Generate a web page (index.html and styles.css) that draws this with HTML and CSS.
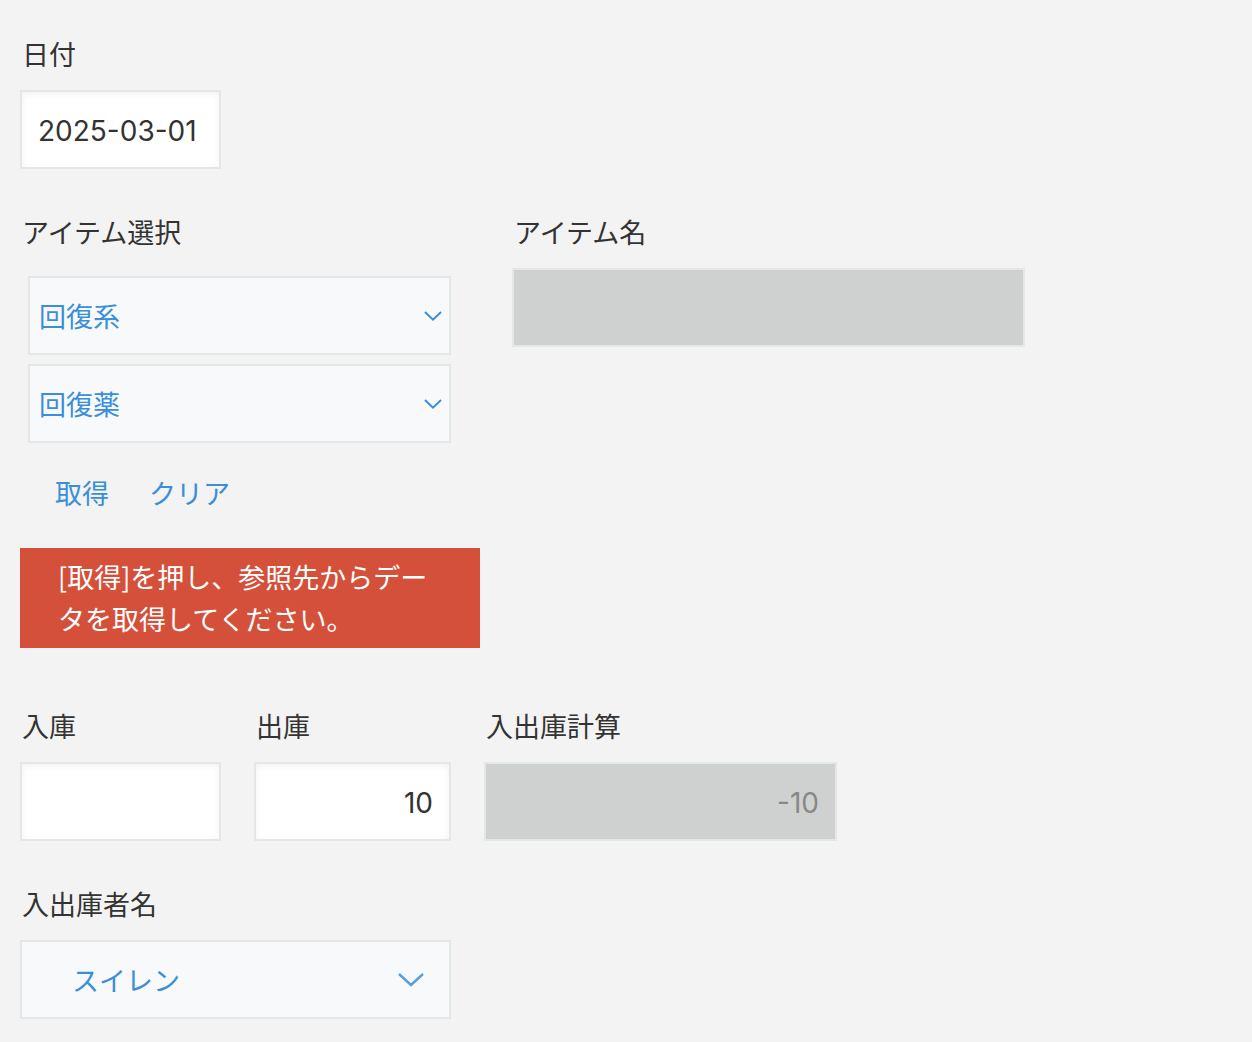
FILE: index.html
```html
<!DOCTYPE html>
<html lang="ja">
<head>
<meta charset="utf-8">
<title>入出庫フォーム</title>
<link rel="stylesheet" href="styles.css">
</head>
<body>
<form class="form">
  <div class="field">
    <div class="label">日付</div>
    <div class="input input-date num-font">2025-03-01</div>
  </div>

  <div class="row row-lookup">
    <div class="field lookup">
      <div class="label">アイテム選択</div>
      <div class="lookup-group">
        <div class="select select-small">
          <span class="select-text">回復系</span>
          <svg class="chev-small" viewBox="0 0 18 10" width="18" height="10"><path d="M1 1 L9 8.6 L17 1" fill="none" stroke="#3a8fd8" stroke-width="2"/></svg>
        </div>
        <div class="select select-small">
          <span class="select-text">回復薬</span>
          <svg class="chev-small" viewBox="0 0 18 10" width="18" height="10"><path d="M1 1 L9 8.6 L17 1" fill="none" stroke="#3a8fd8" stroke-width="2"/></svg>
        </div>
        <div class="buttons">
          <button type="button" class="link-btn">取得</button>
          <button type="button" class="link-btn">クリア</button>
        </div>
      </div>
      <div class="alert">[取得]を押し、参照先からデータを取得してください。</div>
    </div>
    <div class="field">
      <div class="label">アイテム名</div>
      <div class="input disabled input-item"></div>
    </div>
  </div>

  <div class="row row-stock">
    <div class="field">
      <div class="label">入庫</div>
      <div class="input input-in"></div>
    </div>
    <div class="field">
      <div class="label">出庫</div>
      <div class="input input-out num num-font">10</div>
    </div>
    <div class="field">
      <div class="label">入出庫計算</div>
      <div class="input disabled input-calc num num-font">-10</div>
    </div>
  </div>

  <div class="field">
    <div class="label">入出庫者名</div>
    <div class="select select-large">
      <span class="select-text">スイレン</span>
      <svg class="chev-large" viewBox="0 0 28 16" width="28" height="16"><path d="M2 2 L14 13 L26 2" fill="none" stroke="#3a8fd8" stroke-width="2.4" opacity="0.85"/></svg>
    </div>
  </div>
</form>
</body>
</html>
```

FILE: styles.css
```css
* {
  box-sizing: border-box;
}

html, body {
  margin: 0;
  padding: 0;
  background: #f3f3f3;
}

body {
  font-family: "Noto Sans CJK JP", "Noto Sans", sans-serif;
  color: #333333;
  font-size: 27px;
}

.form {
  padding: 34px 20px 0 20px;
}

.field {
  margin-bottom: 43px;
}

.label {
  height: 40px;
  line-height: 40px;
  font-size: 27px;
  padding-left: 2px;
  margin-bottom: 16px;
  color: #333333;
}

.input {
  height: 79px;
  border: 2px solid #e3e7e8;
  background: #ffffff;
  box-shadow: inset 0 2px 6px rgba(0, 0, 0, 0.06);
  font-size: 27px;
  line-height: 75px;
  padding: 0 16px;
  color: #333333;
}

.num-font {
  font-family: "Inter", "Noto Sans CJK JP", sans-serif;
  font-size: 28px;
  line-height: 71px;
  padding-top: 4px;
}

.input-date {
  width: 201px;
}

.num {
  text-align: right;
}

.disabled {
  background: #cfd1d0;
  box-shadow: none;
}

.disabled.num {
  color: #888888;
}

.row {
  display: flex;
  align-items: flex-start;
}

.row-lookup {
  gap: 32px;
}

.lookup {
  width: 460px;
  margin-bottom: 58px;
}

.lookup-group {
  padding: 8px 8px 8px 8px;
}

.input-item {
  width: 513px;
}

.select {
  display: flex;
  align-items: center;
  justify-content: space-between;
  height: 79px;
  border: 2px solid #e3e7e8;
  background: #f7f9fa;
  color: #3a8fd8;
  font-size: 27px;
}

.select-small {
  width: 423px;
  padding: 0 7px 0 9px;
}

.select-small + .select-small {
  margin-top: 9px;
}

.chev-small {
  display: block;
  margin-top: 1px;
}

.select-large {
  width: 431px;
  padding: 0 24px 0 50px;
}

.chev-large {
  display: block;
  margin-top: 1px;
}

.buttons {
  display: flex;
  gap: 40px;
  height: 80px;
  margin-top: 9px;
  align-items: center;
  padding-left: 27px;
}

.link-btn {
  font-family: inherit;
  font-size: 27px;
  color: #3a8fd8;
  background: none;
  border: none;
  padding: 0;
  margin: 0;
  cursor: pointer;
}

.alert {
  margin-top: 8px;
  width: 460px;
  background: #d4503a;
  color: #ffffff;
  font-size: 27px;
  line-height: 42px;
  padding: 8px 36px 8px 38px;
}

.row-stock {
  gap: 33px;
}

.input-in {
  width: 201px;
}

.input-out {
  width: 197px;
}

.input-calc {
  width: 353px;
}
```
